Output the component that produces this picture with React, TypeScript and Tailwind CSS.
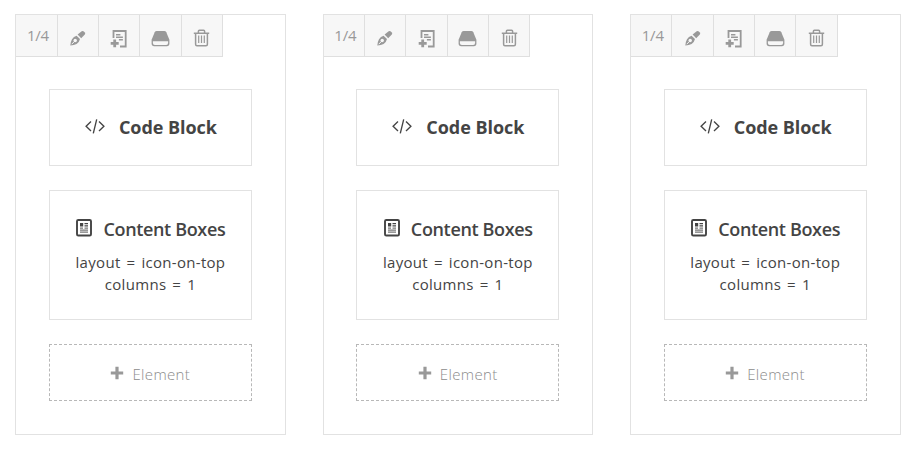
import React from "react";

function BrushIcon() {
  return (
    <svg width="18" height="18" viewBox="0 0 18 18" fill="#999">
      <path d="M8.6 5.6 12.7 2.3Q13.8 1.5 14.8 2.4L15.8 3.4Q16.7 4.4 15.8 5.4L12.2 9.2Z" />
      <path d="M7.6 6.7 11 10.1Q10.4 13.2 7.6 14.9 5 16.3 1.3 16.6 1.4 13.2 3 10.3 4.6 7.3 7.6 6.7Z" />
      <path d="M2.7 15.2 5.7 12.2" stroke="#f7f7f7" strokeWidth="1" />
      <circle cx="6.2" cy="11.5" r="1.7" fill="#f7f7f7" />
    </svg>
  );
}

function CloneIcon() {
  return (
    <svg width="18" height="20" viewBox="0 0 18 20" fill="none" stroke="#999">
      <path d="M3.5 9V2H15.7V17.5H10" strokeWidth="1.8" />
      <path d="M6 5.7H10.4M6 8.2H12.9M8.9 10.7H12.9" strokeWidth="1.4" />
      <path d="M.7 14.3H8.7M4.7 10.4V18.2" strokeWidth="2.8" />
    </svg>
  );
}

function DriveIcon() {
  return (
    <svg width="19" height="16" viewBox="0 0 19 16">
      <path d="M5.6 0H13.4Q14.7 0 15.3 1.2L18.4 8.8V12.6Q18.4 15.2 15.8 15.2H3.2Q.6 15.2.6 12.6V8.8L3.7 1.2Q4.3 0 5.6 0Z" fill="#999" />
      <path d="M1.9 10.2H17.1V12Q17.1 14 15.2 14H3.8Q1.9 14 1.9 12Z" fill="#f7f7f7" />
    </svg>
  );
}

function TrashIcon() {
  return (
    <svg width="17" height="18" viewBox="0 0 17 18" fill="none" stroke="#999" strokeWidth="1.5">
      <path d="M.8 4.2H16.2M5.4 4V2.3Q5.4 1.2 6.4 1.2H10.6Q11.6 1.2 11.6 2.3V4M2.6 4.5V15.2Q2.6 16.7 4 16.7H13Q14.4 16.7 14.4 15.2V4.5" />
      <path d="M5.7 6.5V14M8.5 6.5V14M11.3 6.5V14" strokeWidth="1.2" />
    </svg>
  );
}

function CodeIcon() {
  return (
    <svg width="20" height="15" viewBox="0 0 20 15" fill="none" stroke="#444" strokeWidth="1.35">
      <path d="M6 2.6 1.1 7.3 6 12M14 2.6 18.9 7.3 14 12M11.7.4 8.3 14.3" />
    </svg>
  );
}

function ContentIcon() {
  return (
    <svg width="16" height="18" viewBox="0 0 16 18">
      <rect x="1" y="1" width="14" height="15.5" rx="1.3" fill="none" stroke="#444" strokeWidth="1.9" />
      <path d="M4 4H7.2V7.5H4ZM8.5 4H12V5.2H8.5ZM8.5 6.3H12V7.5H8.5Z" fill="#444" />
      <path d="M4 9.2H7M8.5 9.2H12M4 11.2H12M4 13.2H12" stroke="#777" strokeWidth="1.2" />
    </svg>
  );
}

function Tool({ children }: { children: React.ReactNode }) {
  return (
    <div className="flex h-[42px] w-[41.35px] justify-center border-r border-b border-[#dfdfdf] bg-[#f7f7f7]">
      {children}
    </div>
  );
}

function Column() {
  return (
    <section className="h-[421px] w-[270.6px] shrink-0 border border-[#e2e2e2]">
      <div className="flex text-[#999]">
        <Tool><span className="pt-[8px] pl-[3px] text-[15px] leading-6 tracking-[-0.2px]">1/4</span></Tool>
        <Tool><span className="pt-[14px]"><BrushIcon /></span></Tool>
        <Tool><span className="pt-[14px]"><CloneIcon /></span></Tool>
        <Tool><span className="pt-[16px]"><DriveIcon /></span></Tool>
        <Tool><span className="pt-[14px]"><TrashIcon /></span></Tool>
      </div>
      <div className="pr-[33px] pl-[32.7px] pt-8 text-[#444]">
        <div className="flex h-[77px] items-center justify-center gap-[14px] border border-[#e2e2e2] pb-[2px] pl-px">
          <CodeIcon />
          <span className="w-[98px] text-[18px] leading-6 font-bold tracking-[-0.05px] whitespace-nowrap">Code Block</span>
        </div>
        <div className="mt-6 h-[130px] border border-[#e2e2e2] pt-[26px]">
          <div className="flex items-center justify-center gap-[11px] pl-px">
            <span className="pb-[3px]"><ContentIcon /></span>
            <span className="w-[122px] text-[18px] leading-6 font-semibold tracking-[-0.35px] whitespace-nowrap">Content Boxes</span>
          </div>
          <p className="mt-[10px] text-center text-[15px] leading-[22px] tracking-[0.3px] [word-spacing:1.8px]">
            layout = icon-on-top<br />columns = 1
          </p>
        </div>
        <div className="mt-6 flex h-[57px] items-center justify-center gap-2 border border-dashed border-[#b8b8b8] text-[#8c8c8c]">
          <svg width="14" height="14" viewBox="0 0 14 14" stroke="#999" strokeWidth="3.2"><path d="M.8 7H13.2M7 .8V13.2" /></svg>
          <span className="w-[58px] pt-[3px] text-[15px] leading-6 font-light tracking-[0.35px] whitespace-nowrap">Element</span>
        </div>
      </div>
    </section>
  );
}

export default function App() {
  return (
    <main className="flex h-[456px] w-[920px] gap-[36.8px] overflow-hidden bg-white pt-[14px] pl-[15.3px] font-['Open_Sans','Noto_Sans',sans-serif]">
      <Column />
      <Column />
      <Column />
    </main>
  );
}
